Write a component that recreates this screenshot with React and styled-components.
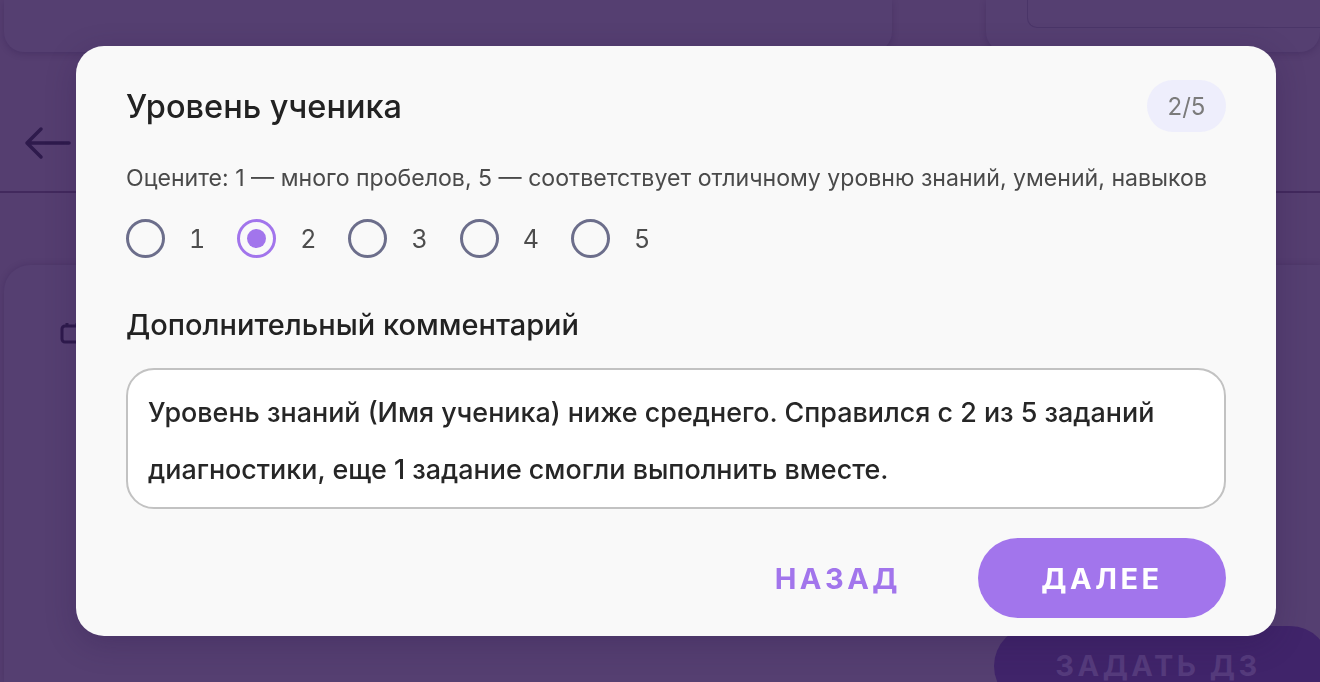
import styled, { createGlobalStyle } from "styled-components";

const GlobalStyle = createGlobalStyle`
  html, body {
    margin: 0;
    padding: 0;
    width: 1320px;
    height: 682px;
    overflow: hidden;
    background: #553e70;
    font-family: Inter, "Noto Sans", sans-serif;
  }
`;

const Page = styled.div`
  width: 1320px;
  height: 682px;
  display: flex;
  flex-direction: column;
  background: #553e70;
  overflow: hidden;
`;

const TopRow = styled.div`
  display: grid;
  grid-template-columns: 888px 334px;
  justify-content: space-between;
  padding: 0 0 0 4px;
  height: 52px;
`;

const TopCard = styled.div`
  background: #553f71;
  border-radius: 0 0 20px 20px;
  box-shadow: 0 2px 6px rgba(40, 20, 70, 0.25);
  display: flex;
  justify-content: flex-end;
  align-items: flex-start;
`;

const InnerField = styled.div`
  width: 292px;
  height: 27px;
  border: 1px solid #4a3568;
  border-top: none;
  border-right: none;
  border-radius: 0 0 0 10px;
`;

const HeaderBar = styled.div`
  height: 141px;
  box-sizing: border-box;
  display: flex;
  align-items: flex-start;
  padding: 74px 0 0 24px;
  border-bottom: 2px solid #42295d;
  color: #2e1a4c;
`;

const ContentCard = styled.div`
  margin: 72px 0 0 4px;
  flex: 1;
  border-radius: 26px 0 0 0;
  background: #553f71;
  box-shadow: 0 0 6px rgba(40, 20, 70, 0.25);
  padding: 56px 0 0 56px;
  display: flex;
  flex-direction: column;
  gap: 196px;
  color: #2e1a4c;
`;

const DarkBar = styled.div`
  width: 24px;
  height: 32px;
  border-left: 3px solid #3a2455;
  margin-left: 16px;
`;

const AssignButton = styled.div`
  position: absolute;
  right: -10px;
  top: 626px;
  width: 336px;
  height: 80px;
  border-radius: 40px;
  background: #40246a;
  color: #553b7c;
  font-family: Inter, sans-serif;
  font-weight: 700;
  font-size: 29px;
  letter-spacing: 3.5px;
  display: flex;
  justify-content: center;
  padding: 22px 8px 0 0;
  box-sizing: border-box;
`;

const Overlay = styled.div`
  position: fixed;
  inset: 0;
  display: flex;
  align-items: center;
  padding-left: 76px;
`;

const Modal = styled.div`
  width: 1200px;
  height: 590px;
  box-sizing: border-box;
  background: #f9f9f9;
  border-radius: 28px;
  padding: 34px 50px 18px 50px;
  display: flex;
  flex-direction: column;
  box-shadow: 0 8px 30px rgba(40, 20, 70, 0.25);
`;

const HeadRow = styled.div`
  display: flex;
  justify-content: space-between;
  align-items: center;
`;

const Title = styled.h2`
  margin: 0;
  font-size: 32.5px;
  font-weight: 500;
  color: #222222;
`;

const Badge = styled.span`
  width: 79px;
  height: 52px;
  border-radius: 26px;
  background: #eeeefc;
  color: #7b7b7b;
  font-size: 24px;
  display: flex;
  align-items: center;
  justify-content: center;
`;

const Hint = styled.p`
  margin: 32px 0 0;
  font-size: 23.1px;
  line-height: 28px;
  color: #4a4a4a;
`;

const RadioRow = styled.div`
  display: flex;
  gap: 32px;
  margin-top: 27px;
`;

const RadioItem = styled.label`
  display: flex;
  align-items: center;
  gap: 24px;
  font-size: 25px;
  font-variant-numeric: tabular-nums;
  color: #4d4d4d;
`;

const Circle = styled.span`
  width: 39px;
  height: 39px;
  box-sizing: border-box;
  border-radius: 50%;
  border: 3px solid ${(p) => (p.$active ? "#a275ec" : "#6c6e8b")};
  display: flex;
  align-items: center;
  justify-content: center;

  &::after {
    content: "";
    width: 19px;
    height: 19px;
    border-radius: 50%;
    background: ${(p) => (p.$active ? "#a275ec" : "transparent")};
  }
`;

const SubTitle = styled.h3`
  margin: 49px 0 0;
  font-size: 29px;
  line-height: 35px;
  font-weight: 500;
  color: #222222;
`;

const CommentBox = styled.div`
  margin-top: 26px;
  height: 141px;
  flex-shrink: 0;
  box-sizing: border-box;
  border: 2px solid #c2c2c2;
  border-radius: 28px;
  background: #ffffff;
  padding: 14px 20px 0 20px;
  font-size: 26.9px;
  font-weight: 500;
  line-height: 57px;
  color: #262626;
`;

const Actions = styled.div`
  margin-top: auto;
  display: flex;
  justify-content: flex-end;
  align-items: center;
  gap: 77px;
`;

const Button = styled.button`
  border: none;
  font-family: Inter, sans-serif;
  font-weight: 700;
  font-size: 29px;
  letter-spacing: 3.5px;
  cursor: pointer;
  height: 80px;
  border-radius: 40px;
  background: ${(p) => (p.$primary ? "#a275ec" : "transparent")};
  color: ${(p) => (p.$primary ? "#ffffff" : "#a275ec")};
  width: ${(p) => (p.$primary ? "248px" : "auto")};
  padding: 0;
`;

const ArrowIcon = () => (
  <svg width="48" height="34" viewBox="0 0 48 34" fill="none" stroke="currentColor" strokeWidth="3.5" strokeLinecap="round" strokeLinejoin="round">
    <path d="M45 17H3M17 3L3 17L17 31" />
  </svg>
);

const CalendarIcon = () => (
  <svg width="24" height="24" viewBox="0 0 24 24" fill="none" stroke="currentColor" strokeWidth="3">
    <rect x="2" y="5" width="20" height="16" rx="3" />
    <path d="M7 2v4M17 2v4" />
  </svg>
);

export default function App() {
  const options = [1, 2, 3, 4, 5];
  return (
    <>
      <GlobalStyle />
      <Page>
        <TopRow>
          <TopCard />
          <TopCard>
            <InnerField />
          </TopCard>
        </TopRow>
        <HeaderBar>
          <ArrowIcon />
        </HeaderBar>
        <ContentCard>
          <CalendarIcon />
          <DarkBar />
        </ContentCard>
      </Page>
      <AssignButton>ЗАДАТЬ ДЗ</AssignButton>
      <Overlay>
        <Modal>
          <HeadRow>
            <Title>Уровень ученика</Title>
            <Badge>2/5</Badge>
          </HeadRow>
          <Hint>Оцените: 1 — много пробелов, 5 — соответствует отличному уровню знаний, умений, навыков</Hint>
          <RadioRow>
            {options.map((n) => (
              <RadioItem key={n}>
                <Circle $active={n === 2} />
                {n}
              </RadioItem>
            ))}
          </RadioRow>
          <SubTitle>Дополнительный комментарий</SubTitle>
          <CommentBox>
            Уровень знаний (Имя ученика) ниже среднего. Справился с 2 из 5 заданий диагностики, еще 1 задание смогли выполнить вместе.
          </CommentBox>
          <Actions>
            <Button>НАЗАД</Button>
            <Button $primary>ДАЛЕЕ</Button>
          </Actions>
        </Modal>
      </Overlay>
    </>
  );
}
